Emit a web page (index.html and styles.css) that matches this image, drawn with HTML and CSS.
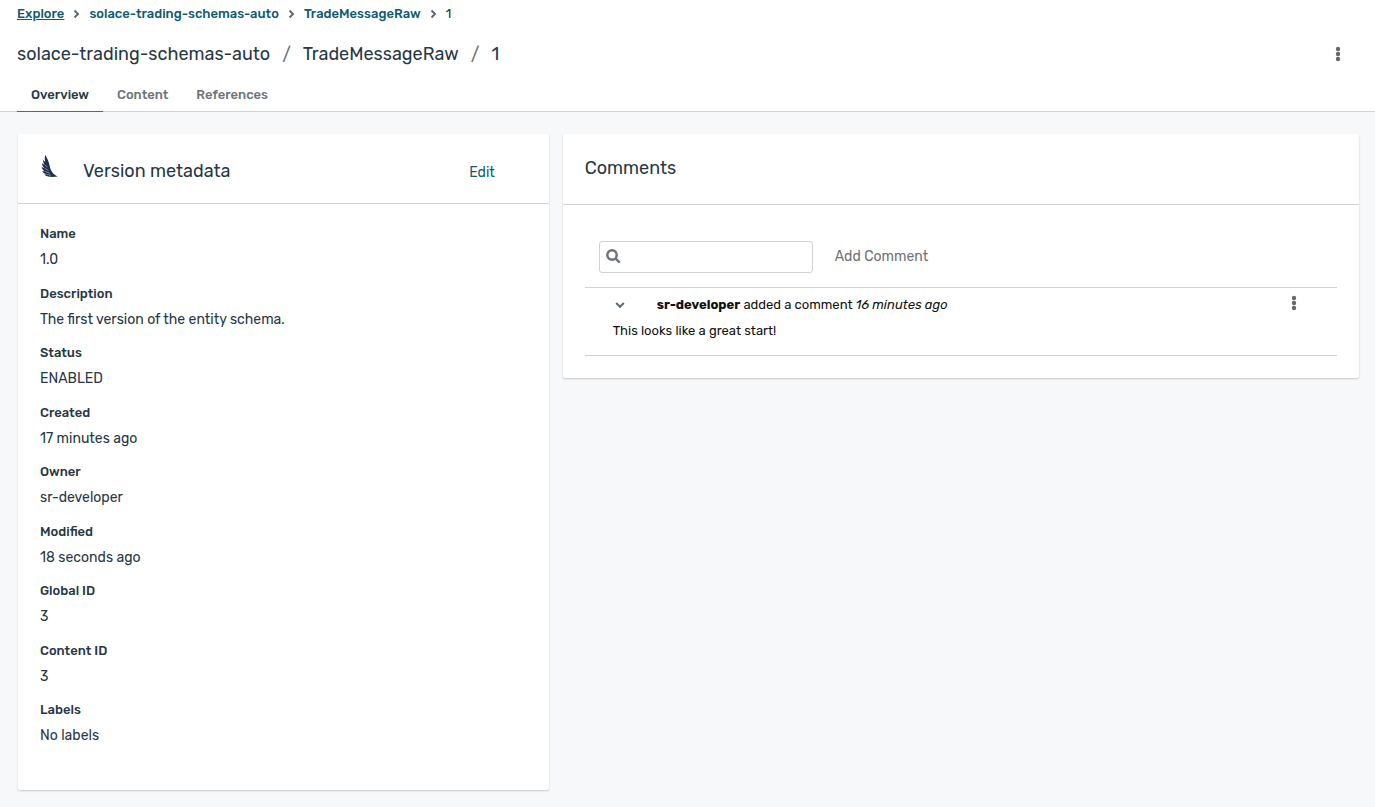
FILE: index.html
```html
<!DOCTYPE html>
<html lang="en">
<head>
    <meta charset="UTF-8">
    <meta name="viewport" content="width=device-width, initial-scale=1.0">
    <title>TradeMessageRaw - Version 1</title>
    <link rel="stylesheet" href="styles.css">
</head>
<body>
    <header class="page-header">
        <nav class="breadcrumb" aria-label="Breadcrumb">
            <a class="active" href="#">Explore</a>
            <svg class="chevron" width="7" height="10" viewBox="0 0 7 10"><path d="M1.500 1.500L5 5L1.500 8.500"/></svg>
            <a href="#">solace-trading-schemas-auto</a>
            <svg class="chevron" width="7" height="10" viewBox="0 0 7 10"><path d="M1.500 1.500L5 5L1.500 8.500"/></svg>
            <a href="#">TradeMessageRaw</a>
            <svg class="chevron" width="7" height="10" viewBox="0 0 7 10"><path d="M1.500 1.500L5 5L1.500 8.500"/></svg>
            <span>1</span>
        </nav>

        <div class="title-row">
            <h1 class="page-title">
                <span>solace-trading-schemas-auto</span>
                <span class="slash">/</span>
                <span>TradeMessageRaw</span>
                <span class="slash">/</span>
                <span>1</span>
            </h1>
            <button class="kebab" type="button" aria-label="Version actions">
                <svg width="6" height="16" viewBox="0 0 6 16"><circle cx="3" cy="3" r="2.200"/><circle cx="3" cy="8" r="2.200"/><circle cx="3" cy="13" r="2.200"/></svg>
            </button>
        </div>

        <div class="tabs" role="tablist">
            <button class="tab selected" type="button" role="tab" aria-selected="true">Overview</button>
            <button class="tab" type="button" role="tab" aria-selected="false">Content</button>
            <button class="tab" type="button" role="tab" aria-selected="false">References</button>
        </div>
    </header>

    <main class="content">
        <!-- Version metadata -->
        <section class="card">
            <div class="card-header metadata-header">
                <svg class="avro-icon" width="18" height="24" viewBox="0 0 18 24">
                    <path d="M5.200 0C7 2.800 8.800 6.400 9.600 10.500C10.400 14.600 11.800 18.800 17.800 21.600C13 22.400 7.500 22.400 4.200 19.600L6.600 19.400C4.300 18.700 2.700 17.400 2.200 15.900L5.200 16.500C3.200 15.300 1.900 13.700 1.600 11.900L4.500 13.200C2.800 11.700 2 9.900 2 8.200L4.700 9.900C3.400 8.300 3 6.600 3.200 5L5.300 6.900C4.500 4.500 4.700 2 5.200 0Z"/>
                    <path class="feather" d="M4.700 9.900L7.700 12.200M4.500 13.200L8.500 15.500M5.200 16.500L9.700 18.200M6.600 19.400L11.300 20.300"/>
                </svg>
                <h2 class="card-title">Version metadata</h2>
                <button class="link-button" type="button">Edit</button>
            </div>
            <dl class="metadata">
                <div><dt>Name</dt><dd>1.0</dd></div>
                <div><dt>Description</dt><dd>The first version of the entity schema.</dd></div>
                <div><dt>Status</dt><dd>ENABLED</dd></div>
                <div><dt>Created</dt><dd>17 minutes ago</dd></div>
                <div><dt>Owner</dt><dd>sr-developer</dd></div>
                <div><dt>Modified</dt><dd>18 seconds ago</dd></div>
                <div><dt>Global ID</dt><dd>3</dd></div>
                <div><dt>Content ID</dt><dd>3</dd></div>
                <div><dt>Labels</dt><dd>No labels</dd></div>
            </dl>
        </section>

        <!-- Comments -->
        <section class="card">
            <div class="card-header comments-header">
                <h2 class="card-title">Comments</h2>
            </div>
            <div class="comments">
                <div class="toolbar">
                    <label class="search">
                        <svg width="15" height="15" viewBox="0 0 15 15"><circle cx="6" cy="6" r="4.700"/><path d="M9.500 9.500l4.200 4.200"/></svg>
                        <input type="text" aria-label="Search comments">
                    </label>
                    <button class="add-button" type="button">Add Comment</button>
                </div>
                <article class="comment">
                    <div class="comment-header">
                        <button class="toggle" type="button" aria-label="Collapse comment">
                            <svg width="10" height="8" viewBox="0 0 10 8"><path d="M1.200 2L5 5.800L8.800 2"/></svg>
                        </button>
                        <p><b>sr-developer</b> added a comment <i>16 minutes ago</i></p>
                        <button class="kebab" type="button" aria-label="Comment actions">
                            <svg width="6" height="16" viewBox="0 0 6 16"><circle cx="3" cy="3" r="2.200"/><circle cx="3" cy="8" r="2.200"/><circle cx="3" cy="13" r="2.200"/></svg>
                        </button>
                    </div>
                    <p class="comment-text">This looks like a great start!</p>
                </article>
            </div>
        </section>
    </main>
</body>
</html>
```
FILE: styles.css
```css
:root {
    --text: #273747;
    --text-muted: #6d7378;
    --link: #0f5b73;
    --accent: #0f8a8a;
    --border: #cfd1d2;
    --background: #f7f8fa;
}

* {
    margin: 0;
    padding: 0;
    box-sizing: border-box;
}

body {
    background: var(--background);
    color: var(--text);
    font-family: Rubik, Roboto, sans-serif;
    font-size: 14px;
    line-height: 20px;
}

button {
    background: none;
    border: none;
    color: inherit;
    font: inherit;
    cursor: pointer;
}

svg {
    display: block;
    flex: none;
}

.page-header {
    background: #fff;
    border-bottom: 1px solid var(--border);
    padding: 4px 17px 0;
}

.breadcrumb {
    display: flex;
    align-items: center;
    gap: 9px;
    font-size: 13px;
}

.breadcrumb a {
    color: var(--link);
    font-weight: 500;
    text-decoration: none;
}

.breadcrumb a.active {
    text-decoration: underline;
}

.chevron {
    fill: none;
    stroke: #5f6b72;
    stroke-width: 2;
}

.title-row {
    display: flex;
    align-items: center;
    justify-content: space-between;
    height: 60px;
    padding-right: 17px;
}

.page-title {
    display: flex;
    gap: 12px;
    font-size: 18px;
    font-weight: 400;
}

.slash {
    color: var(--text-muted);
}

.kebab svg {
    fill: #66696c;
}

.tabs {
    display: flex;
    margin-bottom: -1px;
}

.tab {
    border-bottom: 1px solid transparent;
    padding: 1px 14px 6px;
    color: var(--text-muted);
    font-size: 13px;
    font-weight: 500;
}

.tab.selected {
    border-bottom-color: var(--accent);
    color: var(--text);
}

.content {
    display: grid;
    grid-template-columns: 2fr 3fr;
    align-items: start;
    gap: 14px;
    padding: 22px 16px 16px 18px;
}

.card {
    background: #fff;
    border-radius: 2px;
    box-shadow: 0 1px 2px rgba(0, 0, 0, 0.2);
}

.card-header {
    display: flex;
    align-items: center;
    height: 70px;
    border-bottom: 1px solid var(--border);
    padding: 0 22px;
}

.metadata-header {
    padding-top: 5px;
    padding-right: 54px;
}

.comments-header {
    height: 71px;
    padding-bottom: 2px;
}

.avro-icon {
    fill: #1f2f4d;
    margin: 0 25px 8px 0;
}

.avro-icon .feather {
    fill: none;
    stroke: #fff;
    stroke-width: 0.4;
}

.card-title {
    font-size: 18px;
    font-weight: 400;
}

.link-button {
    margin-left: auto;
    padding-top: 4px;
    color: var(--link);
}

.metadata {
    display: grid;
    grid-auto-rows: 1fr;
    min-height: 586px;
    padding: 20px 22px 30px;
}

.metadata dt {
    font-size: 13px;
    font-weight: 500;
    margin-bottom: 6px;
}

.comments {
    padding: 36px 22px 22px;
}

.toolbar {
    display: flex;
    align-items: center;
    gap: 22px;
    border-bottom: 1px solid var(--border);
    padding: 0 14px 14px;
}

.search {
    display: flex;
    align-items: center;
    gap: 8px;
    width: 214px;
    height: 32px;
    border: 1px solid var(--border);
    border-radius: 3px;
    padding: 0 6px 2px;
}

.search svg {
    fill: none;
    stroke: #6d7378;
    stroke-width: 2.4;
}

.search input {
    flex: 1;
    min-width: 0;
    border: none;
    outline: none;
    background: none;
    color: inherit;
    font: inherit;
}

.add-button {
    color: var(--text-muted);
}

.comment {
    border-bottom: 1px solid var(--border);
    padding: 7px 40px 14px 28px;
    color: #111;
    font-size: 13px;
}

.comment-header {
    display: flex;
    align-items: center;
    margin-bottom: 6px;
}

.toggle {
    margin: 0 32px 0 2px;
}

.toggle svg {
    fill: none;
    stroke: #5f6b72;
    stroke-width: 2;
}

.comment .kebab {
    margin-left: auto;
    padding-bottom: 4px;
}
```
